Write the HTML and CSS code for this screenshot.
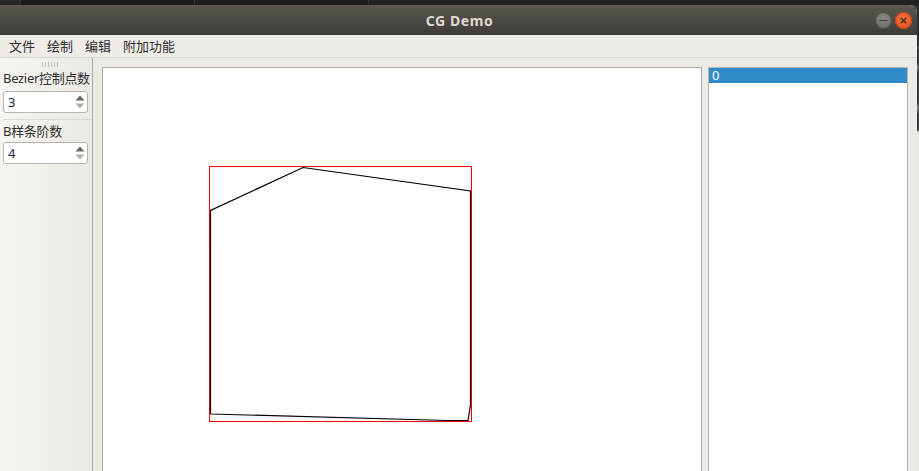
FILE: index.html
```html
<!DOCTYPE html>
<html lang="zh">
<head>
<meta charset="utf-8">
<title>CG Demo</title>
<link rel="stylesheet" href="styles.css">
</head>
<body>
<div class="desktop">
  <div class="topstrip"><span class="seg s1"></span><span class="seg s2"></span><span class="seg s3"></span><span class="seg s4"></span></div>
  <div class="row">
    <div class="window">
      <div class="titlebar">
        <div></div>
        <div class="title">CG Demo</div>
        <div class="buttons">
          <span class="btn min"><svg width="17" height="17" viewBox="0 0 17 17"><line x1="4.5" y1="8.5" x2="12.5" y2="8.5" stroke="#3a3935" stroke-width="1.2"/></svg></span>
          <span class="btn close"><svg width="17" height="17" viewBox="0 0 17 17"><path d="M5.8 5.8 L11.2 11.2 M11.2 5.8 L5.8 11.2" stroke="#4a2a1a" stroke-width="1.3"/></svg></span>
        </div>
      </div>
      <div class="menubar">
        <span class="menu">文件</span>
        <span class="menu">绘制</span>
        <span class="menu">编辑</span>
        <span class="menu">附加功能</span>
      </div>
      <div class="content">
        <div class="dock">
          <div class="handle"></div>
          <div class="label first">Bezier控制点数</div>
          <div class="spin">
            <span class="val">3</span>
            <span class="arrows">
              <svg width="12" height="20" viewBox="0 0 12 20"><path d="M1.5 8.5 L6 3.5 L10.5 8.5 Z" fill="#6a6763"/><path d="M1.5 11.5 L6 16.5 L10.5 11.5 Z" fill="#b3b0ac"/></svg>
            </span>
          </div>
          <div class="sep"></div>
          <div class="label">B样条阶数</div>
          <div class="spin">
            <span class="val">4</span>
            <span class="arrows">
              <svg width="12" height="20" viewBox="0 0 12 20"><path d="M1.5 8.5 L6 3.5 L10.5 8.5 Z" fill="#6a6763"/><path d="M1.5 11.5 L6 16.5 L10.5 11.5 Z" fill="#b3b0ac"/></svg>
            </span>
          </div>
        </div>
        <div class="central">
          <div class="canvas">
            <svg class="drawing" width="598" height="420" viewBox="103 68 598 420">
              <rect x="209.5" y="166.5" width="262" height="255" fill="none" stroke="#ff0000" stroke-width="1"/>
              <polyline points="210.5,414 210.5,210.5 303,167.5 470.5,191 470.5,405 468,420.5 447,420.5 210.5,414" fill="none" stroke="#000" stroke-width="1.2"/>
            </svg>
          </div>
          <div class="list">
            <div class="item selected">0</div>
          </div>
        </div>
      </div>
    </div>
    <div class="edge"></div>
  </div>
</div>
</body>
</html>
```
FILE: styles.css
```css
html, body {
  margin: 0;
  padding: 0;
  width: 919px;
  height: 471px;
  overflow: hidden;
  background: #2a2a2a;
  font-family: "Noto Sans", "Noto Sans CJK SC", sans-serif;
}
.desktop {
  width: 919px;
  height: 471px;
  display: flex;
  flex-direction: column;
}
.topstrip {
  height: 5px;
  display: flex;
  background: #1c1c1c;
}
.seg { height: 5px; display: block; }
.s1 { width: 20px; background: #262626; }
.s2 { width: 173px; background: #1b1b1b; border-left: 1px solid #333; }
.s3 { width: 173px; background: #1e1e1e; border-left: 1px solid #333; }
.s4 { flex: 1; background: #222; border-left: 1px solid #333; }
.row {
  flex: 1;
  display: flex;
  min-height: 0;
}
.window {
  width: 917px;
  display: flex;
  flex-direction: column;
  background: #edeae6;
  border-top-right-radius: 7px;
  overflow: hidden;
}
.edge {
  flex: 1;
  background: linear-gradient(#2e2e2e 0, #2e2e2e 40px, #555 42px, #3a3a3a 45px, #3a3a3a 58px, #777 62px, #3a3a3a 68px, #3a3a3a 98px, #777 102px, #3a3a3a 110px, #3a3a3a 125px, #e9e7e3 127px);
}
.titlebar {
  height: 30px;
  display: grid;
  grid-template-columns: 1fr auto 1fr;
  align-items: center;
  background: linear-gradient(#5a574f, #3d3c38);
}
.title {
  color: #dfdbd2;
  font-weight: bold;
  font-size: 14px;
  letter-spacing: 0.6px;
  padding-left: 2px;
}
.buttons {
  display: flex;
  justify-content: flex-end;
  gap: 3px;
  padding-right: 5px;
}
.btn {
  width: 17px;
  height: 17px;
  border-radius: 50%;
  display: block;
}
.btn svg { display: block; }
.min {
  background: radial-gradient(circle at 50% 35%, #8a8782, #67645f);
  box-shadow: inset 0 0 0 1px #4d4b47;
}
.close {
  background: radial-gradient(circle at 50% 35%, #f5703a, #e0501f);
  box-shadow: inset 0 0 0 1px #b8431d;
}
.menubar {
  height: 22px;
  border-bottom: 1px solid #d6d2cd;
  display: flex;
  align-items: center;
  padding-left: 3px;
  background: #efece8;
}
.menu {
  font-size: 13px;
  color: #2f2f2f;
  padding: 0 6px;
  line-height: 22px;
}
.content {
  flex: 1;
  display: flex;
  min-height: 0;
}
.dock {
  width: 89px;
  padding-left: 3px;
  border-right: 1px solid #aba7a2;
  background: linear-gradient(to right, #f7f5f1, #ece9e4);
  display: flex;
  flex-direction: column;
}
.handle {
  margin: 4px 0 0 38px;
  width: 17px;
  height: 5px;
  background-image: radial-gradient(circle, #bdb9b4 0.8px, transparent 1px);
  background-size: 3px 2.5px;
}
.label {
  margin-top: 2px;
  font-size: 13px;
  line-height: 18px;
  color: #2f2f2f;
  white-space: nowrap;
  letter-spacing: -0.3px;
}
.spin {
  margin-top: 4px;
  width: 85px;
  height: 22px;
  box-sizing: border-box;
  border: 1px solid #b8b3ad;
  border-radius: 3px;
  background: #fff;
  display: flex;
  align-items: center;
  justify-content: space-between;
}
.sep + .label + .spin { margin-top: 2px; }
.val {
  font-size: 13px;
  color: #1b1b3a;
  padding-left: 4px;
}
.arrows {
  width: 12px;
  height: 20px;
  display: block;
  padding-right: 1px;
}
.arrows svg { display: block; }
.sep {
  margin-top: 6px;
  height: 1px;
  background: #dcd8d3;
}
.sep + .label { margin-top: 2px; }
.central {
  flex: 1;
  display: flex;
  gap: 6px;
  padding: 9px 8px 0 9px;
  min-height: 0;
}
.canvas {
  width: 598px;
  height: 420px;
  border: 1px solid #aeaaa6;
  background: #fff;
}
.drawing { display: block; }
.list {
  width: 198px;
  height: 420px;
  border: 1px solid #b9b5b0;
  background: #fff;
}
.item {
  height: 15px;
  line-height: 15px;
  font-size: 13px;
  padding-left: 3px;
}
.selected {
  background: #2f8bc7;
  color: #fff;
}
```
